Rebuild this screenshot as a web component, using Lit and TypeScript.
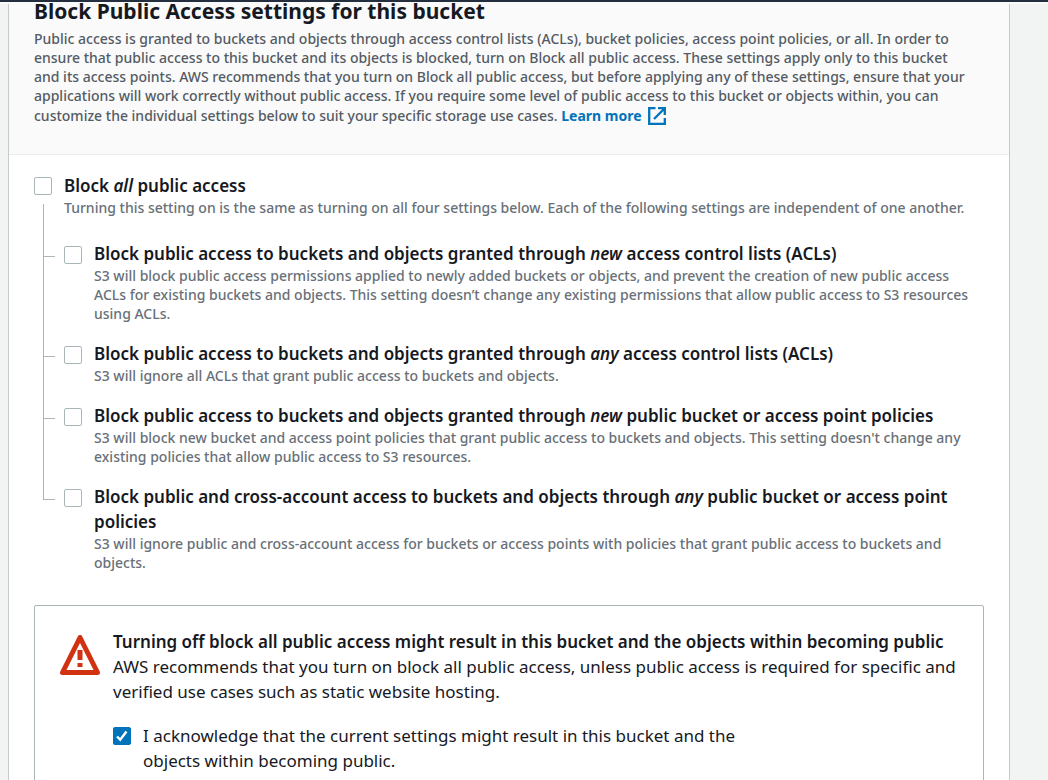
import { LitElement, html, css, TemplateResult } from "lit";
import { customElement } from "lit/decorators.js";

interface Setting {
  id: string;
  title: TemplateResult;
  text: string;
}

const SETTINGS: Setting[] = [
  {
    id: "new-acls",
    title: html`Block public access to buckets and objects granted through <em>new</em> access control lists (ACLs)`,
    text: "S3 will block public access permissions applied to newly added buckets or objects, and prevent the creation of new public access ACLs for existing buckets and objects. This setting doesn’t change any existing permissions that allow public access to S3 resources using ACLs.",
  },
  {
    id: "any-acls",
    title: html`Block public access to buckets and objects granted through <em>any</em> access control lists (ACLs)`,
    text: "S3 will ignore all ACLs that grant public access to buckets and objects.",
  },
  {
    id: "new-policies",
    title: html`Block public access to buckets and objects granted through <em>new</em> public bucket or access point policies`,
    text: "S3 will block new bucket and access point policies that grant public access to buckets and objects. This setting doesn't change any existing policies that allow public access to S3 resources.",
  },
  {
    id: "any-policies",
    title: html`Block public and cross-account access to buckets and objects through <em>any</em> public bucket or access point policies`,
    text: "S3 will ignore public and cross-account access for buckets or access points with policies that grant public access to buckets and objects.",
  },
];

@customElement("app-root")
export class AppRoot extends LitElement {
  static styles = css`
    :host {
      display: flex;
      flex-direction: column;
      height: 100vh;
      overflow: hidden;
      background: #f2f3f3;
      color: #16191f;
      font-family: "Noto Sans", sans-serif;
      font-size: 17px;
      line-height: 25px;
    }
    * {
      box-sizing: border-box;
    }
    h2, p, ul {
      margin: 0;
      padding: 0;
    }
    .topbar {
      flex: none;
      height: 4px;
      background: #fafafa;
      border-top: 2px solid #232f3e;
    }
    .panel {
      flex: none;
      margin: 0 38px 0 8px;
      border: 1px solid #c6caca;
      border-width: 0 1px;
      background: #fff;
    }
    .header {
      padding: 0 40px 28px 25px;
      background: #fafafa;
      border-bottom: 1px solid #eaeded;
    }
    .header h2 {
      margin-bottom: 10px;
      font-size: 21px;
      font-weight: 700;
      line-height: 15px;
    }
    .small {
      font-size: 14px;
      font-weight: 500;
      line-height: 19px;
      color: #687078;
    }
    .header .small {
      color: #545b64;
    }
    .learn {
      color: #0073bb;
      font-weight: 700;
      line-height: 21px;
      text-decoration: none;
      white-space: nowrap;
    }
    .learn svg {
      width: 20px;
      height: 20px;
      margin-left: 2px;
      vertical-align: -5px;
    }
    .body {
      padding: 18px 25px 40px;
    }
    .title {
      display: block;
      font-weight: 600;
    }
    .check {
      appearance: none;
      flex: none;
      width: 18px;
      height: 18px;
      margin: 0;
      border: 1px solid #aab7b8;
      border-radius: 2px;
      background: #fff;
    }
    .check:checked {
      border-color: #0073bb;
      background: #0073bb url("data:image/svg+xml,%3Csvg xmlns='http://www.w3.org/2000/svg' viewBox='0 0 16 16'%3E%3Cpath d='M3 8.5l3.2 3.2L12.5 3.5' fill='none' stroke='white' stroke-width='2.4'/%3E%3C/svg%3E") center / 16px no-repeat;
    }
    .all {
      display: flex;
      gap: 12px;
    }
    .stem {
      display: flex;
      flex-direction: column;
      gap: 9px;
      padding-top: 4px;
    }
    .rail {
      flex: 1;
      margin-left: 9px;
      border-left: 1px solid #aab7b8;
    }
    .all-text {
      flex: 1;
      padding-bottom: 24px;
    }
    .tree {
      list-style: none;
      padding-left: 9px;
    }
    .item {
      display: flex;
    }
    .branch {
      display: flex;
      flex-direction: column;
      width: 12px;
      margin-right: 9px;
    }
    .tick {
      height: 16px;
      border: 1px solid #aab7b8;
      border-width: 0 0 1px 1px;
    }
    .item .rail {
      margin-left: 0;
    }
    .item:last-child .rail {
      border: 0;
    }
    .item .check {
      margin: 5px 12px 0 0;
    }
    .item-text {
      flex: 1;
      padding-bottom: 18px;
    }
    .alert {
      display: flex;
      gap: 13px;
      margin-top: 15px;
      padding: 23px 25px;
      border: 1px solid #aab7b8;
      border-radius: 2px;
    }
    .warn {
      flex: none;
      width: 40px;
      height: 40px;
      margin-top: 6px;
    }
    .ack {
      display: flex;
      gap: 12px;
      max-width: 640px;
      margin-top: 19px;
    }
    .ack .check {
      margin-top: 4px;
    }
  `;

  render() {
    return html`
      <div class="topbar"></div>
      <section class="panel">
        <header class="header">
          <h2>Block Public Access settings for this bucket</h2>
          <p class="small">
            Public access is granted to buckets and objects through access control lists (ACLs), bucket policies, access
            point policies, or all. In order to ensure that public access to this bucket and its objects is blocked, turn
            on Block all public access. These settings apply only to this bucket and its access points. AWS recommends
            that you turn on Block all public access, but before applying any of these settings, ensure that your
            applications will work correctly without public access. If you require some level of public access to this
            bucket or objects within, you can customize the individual settings below to suit your specific storage use
            cases.
            <a class="learn" href="#">Learn more
              <svg viewBox="0 0 20 20" fill="none" stroke="currentColor" stroke-width="2.3" aria-hidden="true">
                <path d="M8.5 2.2H2.2v15.6h15.6V12M11 2.2h6.8V9M17.5 2.5L7 13" />
              </svg></a>
          </p>
        </header>
        <div class="body">
          <div class="all">
            <div class="stem">
              <input class="check" type="checkbox" id="block-all" />
              <span class="rail"></span>
            </div>
            <div class="all-text">
              <label class="title" for="block-all">Block <em>all</em> public access</label>
              <p class="small">
                Turning this setting on is the same as turning on all four settings below. Each of the following settings
                are independent of one another.
              </p>
            </div>
          </div>
          <ul class="tree">
            ${SETTINGS.map(
              (s) => html`
                <li class="item">
                  <div class="branch"><span class="tick"></span><span class="rail"></span></div>
                  <input class="check" type="checkbox" id=${s.id} />
                  <div class="item-text">
                    <label class="title" for=${s.id}>${s.title}</label>
                    <p class="small">${s.text}</p>
                  </div>
                </li>
              `
            )}
          </ul>
          <div class="alert">
            <svg class="warn" viewBox="0 0 40 40" aria-hidden="true">
              <path d="M20 2.5L2.5 37.5h35z" fill="none" stroke="#d13212" stroke-width="5" stroke-linejoin="round" />
              <path d="M20 15v10M20 28v4" stroke="#d13212" stroke-width="5" />
            </svg>
            <div>
              <strong class="title"
                >Turning off block all public access might result in this bucket and the objects within becoming
                public</strong
              >
              <p>
                AWS recommends that you turn on block all public access, unless public access is required for specific
                and verified use cases such as static website hosting.
              </p>
              <div class="ack">
                <input class="check" type="checkbox" id="ack" checked />
                <label for="ack"
                  >I acknowledge that the current settings might result in this bucket and the objects within becoming
                  public.</label
                >
              </div>
            </div>
          </div>
        </div>
      </section>
    `;
  }
}
